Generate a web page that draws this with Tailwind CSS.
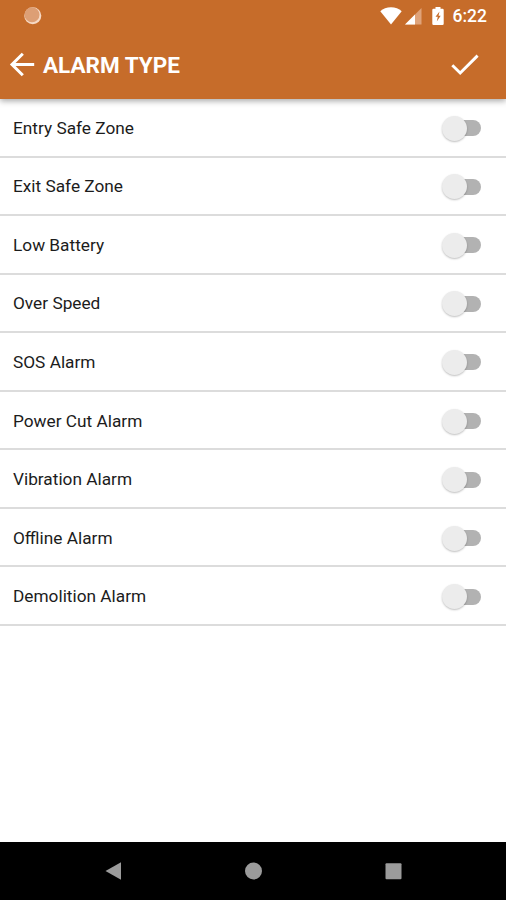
<!DOCTYPE html>
<html lang="en">
<head>
    <meta charset="UTF-8">
    <meta name="viewport" content="width=device-width, initial-scale=1.0">
    <title>Alarm Type</title>
    <script src="https://cdn.jsdelivr.net/npm/@tailwindcss/browser@4"></script>
</head>
<body class="font-['Roboto',sans-serif] bg-white">

    <div class="flex flex-col w-full h-[900px] overflow-hidden">
        <header class="relative shrink-0 h-[99px] bg-[#c66c2a] text-white shadow-[0_2px_6px_rgba(0,0,0,0.35)]">
            <!-- Status bar -->
            <div class="flex items-center justify-between h-[31px] pl-[23px] pr-[19px]">
                <svg class="w-[19px] h-[19px]" viewBox="0 0 19 19">
                    <circle cx="9.8" cy="9.7" r="8.5" fill="#f6d9c4"/>
                    <circle cx="9" cy="8.8" r="7.5" fill="#dd9f75"/>
                </svg>
                <div class="flex items-center">
                    <svg class="w-[22px] h-[18px]" viewBox="0 0 22 18" fill="#fff">
                        <path d="M11 17.5 0.3 4.300C3 1.500 6.800 .3 11 .3s8 1.200 10.700 4z"/>
                    </svg>
                    <svg class="w-[17px] h-[18px] ml-[3px]" viewBox="0 0 17 18">
                        <path d="M0 17.5 16.500 1v16.500z" fill="#dfa37a"/>
                        <path d="M0 17.5 10 7.500v10z" fill="#fff"/>
                    </svg>
                    <svg class="w-[12px] h-[20px] ml-[10px]" viewBox="0 0 12 20">
                        <path d="M3.500 1h5v1.800h2q1.200 0 1.200 1.200v13.800q0 1.200-1.200 1.200h-9q-1.200 0-1.200-1.200V4q0-1.200 1.200-1.200h2z" fill="#fff"/>
                        <path d="M7.500 5.500 3.500 10.800h2.300L4.800 15.500l3.900-5.700H6.500z" fill="#c66c2a"/>
                    </svg>
                    <span class="ml-[9px] pt-px text-[17.5px] leading-[31px] font-medium">6:22</span>
                </div>
            </div>
            <!-- Toolbar -->
            <div class="flex items-center h-[68px] pl-[9px] pr-[27px]">
                <svg class="w-[26px] h-[26px]" viewBox="0 0 26 26" fill="none" stroke="#fff" stroke-width="3">
                    <path d="M25.200 12.500H3M13.800 1.800 3 12.500l10.800 10.700"/>
                </svg>
                <h1 class="ml-[8px] pt-[2px] text-[22.5px] font-bold">ALARM TYPE</h1>
                <svg class="w-[28px] h-[22px] ml-auto" viewBox="0 0 28 22" fill="none" stroke="#fff" stroke-width="2.900">
                    <path d="M1.300 11.300 9.200 19 26.600 1.600"/>
                </svg>
            </div>
        </header>

        <ul id="alarm-list" class="grow text-[17.25px] text-[#1c1c1c]"></ul>

        <!-- Navigation bar -->
        <nav class="flex items-center justify-between shrink-0 h-[58px] px-[105px] pr-[104px] bg-black">
            <svg class="w-[17px] h-[18px]" viewBox="0 0 17 18" fill="#9b9b9b"><path d="M.5 9 16 .3v17.400z"/></svg>
            <svg class="w-[18px] h-[18px]" viewBox="0 0 18 18" fill="#9b9b9b"><circle cx="8.500" cy="9" r="8.500"/></svg>
            <svg class="w-[17px] h-[17px]" viewBox="0 0 17 17" fill="#9b9b9b"><rect x=".5" y=".2" width="16" height="16" rx="1"/></svg>
        </nav>
    </div>

    <script>
        const alarms = [
            'Entry Safe Zone',
            'Exit Safe Zone',
            'Low Battery',
            'Over Speed',
            'SOS Alarm',
            'Power Cut Alarm',
            'Vibration Alarm',
            'Offline Alarm',
            'Demolition Alarm'
        ];

        document.getElementById('alarm-list').innerHTML = alarms.map(alarm => `
            <li class="flex items-center justify-between h-[58.55px] pt-[2px] pl-[13px] pr-[25px] border-b-2 border-[#dcdcdc]">
                <span class="pt-px">${alarm}</span>
                <span class="flex items-center justify-end w-[39px] h-[26px]">
                    <span class="size-[25px] shrink-0 rounded-full bg-[#ececec] shadow-[0_1px_2px_rgba(0,0,0,0.25)] z-10"></span>
                    <span class="w-[22px] h-[16px] -ml-[8px] rounded-r-full bg-[#b2b2b2]"></span>
                </span>
            </li>
        `).join('');
    </script>

</body>
</html>
